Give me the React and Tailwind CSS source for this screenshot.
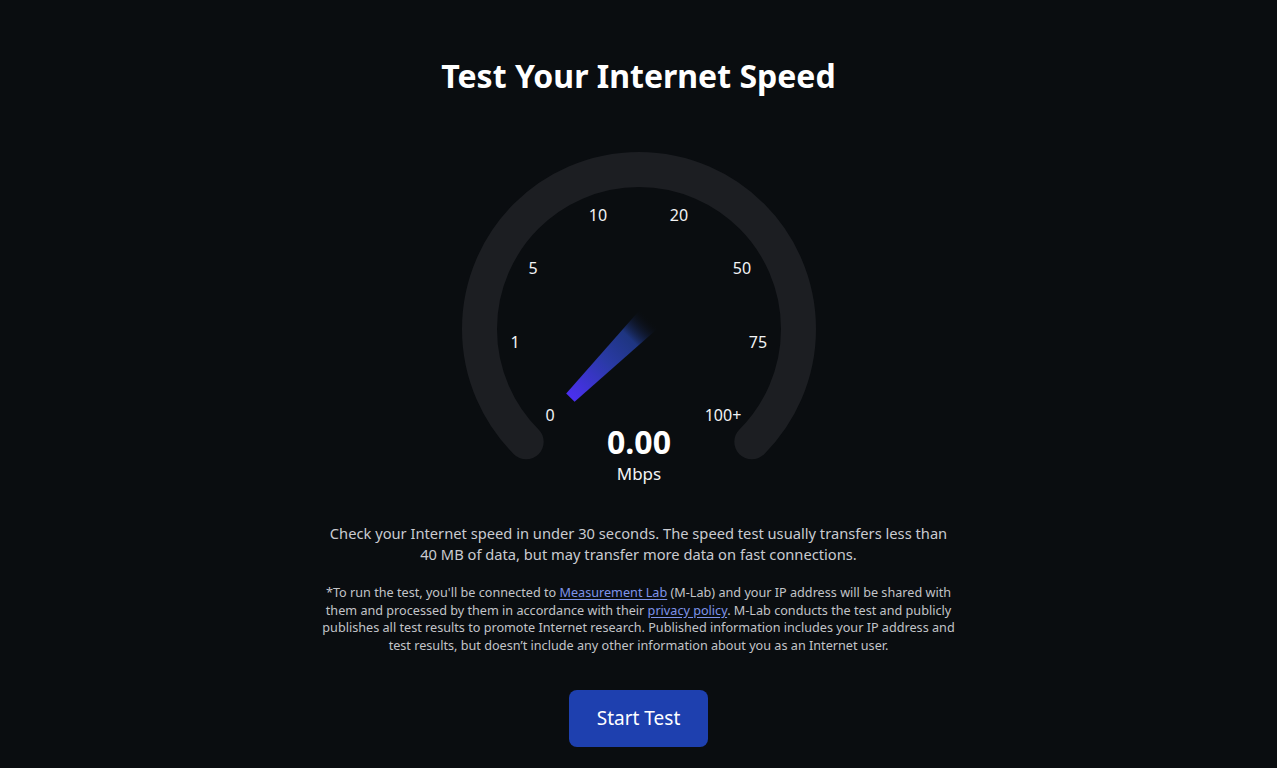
import React from 'react';

const etiquetas = [
  { t: '0', x: 91, y: 267 },
  { t: '1', x: 56, y: 194 },
  { t: '5', x: 74, y: 120 },
  { t: '10', x: 139, y: 67 },
  { t: '20', x: 220, y: 67 },
  { t: '50', x: 283, y: 120 },
  { t: '75', x: 299, y: 194 },
  { t: '100+', x: 264, y: 267 },
];

const Velocimetro = () => (
  <svg width="360" height="345" viewBox="0 0 360 345" className="block">
    <defs>
      <linearGradient id="aguja" gradientUnits="userSpaceOnUse" x1="111.4" y1="249.6" x2="190.6" y2="170.4">
        <stop offset="0" stopColor="#4b2ff0" />
        <stop offset="0.45" stopColor="#2a3aa6" />
        <stop offset="0.75" stopColor="#1e3580" />
        <stop offset="1" stopColor="#0a0d10" stopOpacity="0" />
      </linearGradient>
    </defs>
    <path
      d="M 67.2 293.8 A 159.5 159.5 0 1 1 292.8 293.8"
      fill="none"
      stroke="#1c1e22"
      strokeWidth="35"
      strokeLinecap="round"
    />
    <polygon points="199.8,179.6 181.4,161.2 107.2,245.4 115.6,253.8" fill="url(#aguja)" />
    {etiquetas.map((e) => (
      <text
        key={e.t}
        x={e.x}
        y={e.y}
        textAnchor="middle"
        dominantBaseline="central"
        fill="#f2f3f5"
        fontSize="16"
        fontFamily="'Noto Sans', sans-serif"
      >
        {e.t}
      </text>
    ))}
    <text x="180" y="293" textAnchor="middle" dominantBaseline="central" fill="#ffffff" fontSize="32" fontWeight="700" fontFamily="'Noto Sans', sans-serif">
      0.00
    </text>
    <text x="180" y="325" textAnchor="middle" dominantBaseline="central" fill="#f2f3f5" fontSize="17" fontFamily="'Noto Sans', sans-serif">
      Mbps
    </text>
  </svg>
);

const App = () => {
  return (
    <div className="min-h-screen bg-[#0a0d10] font-['Noto_Sans',sans-serif] flex flex-col items-center pt-[56px]">
      <h1 className="text-[32px] leading-[40px] font-bold text-white">Test Your Internet Speed</h1>

      <div className="mt-[52px]">
        <Velocimetro />
      </div>

      <p className="mt-[30px] w-[628px] text-center text-[14.7px] leading-[21px] text-[#c9cbd0]">
        Check your Internet speed in under 30 seconds. The speed test usually transfers less than 40 MB of data, but may
        transfer more data on fast connections.
      </p>

      <p className="mt-[19px] w-[645px] text-center text-[12.65px] leading-[17.7px] text-[#c2c4c8]">
        *To run the test, you'll be connected to{' '}
        <a href="#" className="text-[#7e94ea] underline underline-offset-2">
          Measurement Lab
        </a>{' '}
        (M-Lab) and your IP address will be shared with them and processed by them in accordance with their{' '}
        <a href="#" className="text-[#7e94ea] underline underline-offset-2">
          privacy policy
        </a>
        . M-Lab conducts the test and publicly publishes all test results to promote Internet research. Published
        information includes your IP address and test results, but doesn’t include any other information about you as an
        Internet user.
      </p>

      <button className="mt-[35px] w-[139px] h-[57px] rounded-lg bg-[#1e40af] text-white text-[19px]">
        Start Test
      </button>
    </div>
  );
};

export default App;
